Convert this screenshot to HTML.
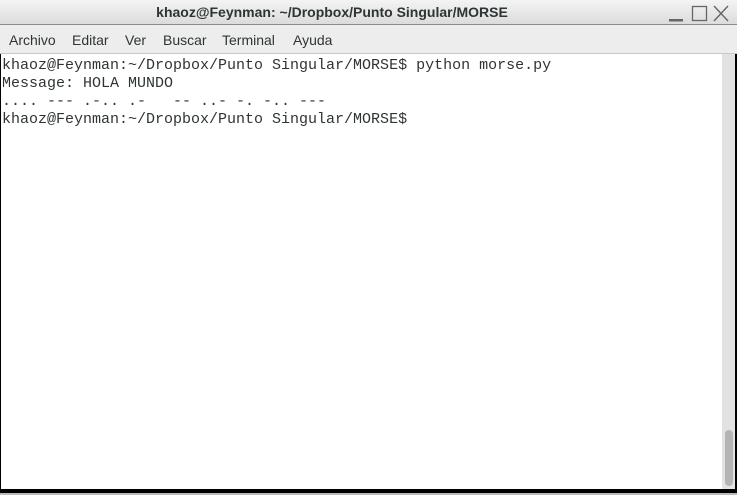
<!DOCTYPE html>
<html><head><style>
html,body{margin:0;padding:0;width:737px;height:495px;overflow:hidden;background:#fff;}
.title{position:absolute;left:0;top:0;width:737px;height:24px;background:linear-gradient(#f4f4f4,#dcdcdc);border-bottom:1px solid #8a8a8a;}
.title span{position:absolute;left:0;width:664px;text-align:center;top:4px;font:bold 14px "Liberation Sans",sans-serif;color:#2e3436;}
.menu{position:absolute;left:0;top:25px;width:737px;height:28px;background:#ededed;border-bottom:1px solid #c8c8c8;}
.menu span{position:absolute;top:7px;font:14px "Liberation Sans",sans-serif;color:#2e3436;}
.term{position:absolute;left:1px;top:54px;width:721px;height:435px;background:#fff;}
pre{margin:0;position:absolute;left:1px;top:3px;font:15px/18px "Liberation Mono",monospace;color:#2e3436;}
.lb{position:absolute;left:0;top:54px;width:1px;height:436px;background:#000;}
.sb{position:absolute;left:722px;top:54px;width:13px;height:435px;background:#e2e2e2;}
.thumb{position:absolute;left:725px;top:430px;width:8px;height:56px;background:#b4b4b4;border-radius:4px;}
.rb{position:absolute;left:735px;top:54px;width:2px;height:439px;background:#000;}
.bb{position:absolute;left:0;top:489px;width:737px;height:4px;background:#000;}
.bg{position:absolute;left:0;top:493px;width:737px;height:2px;background:#bbb;}
</style></head><body>
<div class="title"><span>khaoz@Feynman: ~/Dropbox/Punto Singular/MORSE</span>
<svg style="position:absolute;left:660px;top:4px" width="75" height="18">
<rect x="9" y="15" width="14" height="2.5" fill="#666"/>
<rect x="32.5" y="2.5" width="14" height="14" fill="none" stroke="#666" stroke-width="1.3"/>
<path d="M54 2 L68 17 M68 2 L54 17" stroke="#666" stroke-width="1.4"/>
</svg></div>
<div class="menu"><span style="left:9px">Archivo</span><span style="left:72px">Editar</span><span style="left:125px">Ver</span><span style="left:163px">Buscar</span><span style="left:222px">Terminal</span><span style="left:293px">Ayuda</span></div>
<div class="term"><pre>khaoz@Feynman:~/Dropbox/Punto Singular/MORSE$ python morse.py
Message: HOLA MUNDO
.... --- .-.. .-   -- ..- -. -.. ---
khaoz@Feynman:~/Dropbox/Punto Singular/MORSE$</pre></div>
<div class="lb"></div>
<div class="sb"></div><div class="thumb"></div>
<div class="rb"></div><div class="bb"></div><div class="bg"></div>
</body></html>
